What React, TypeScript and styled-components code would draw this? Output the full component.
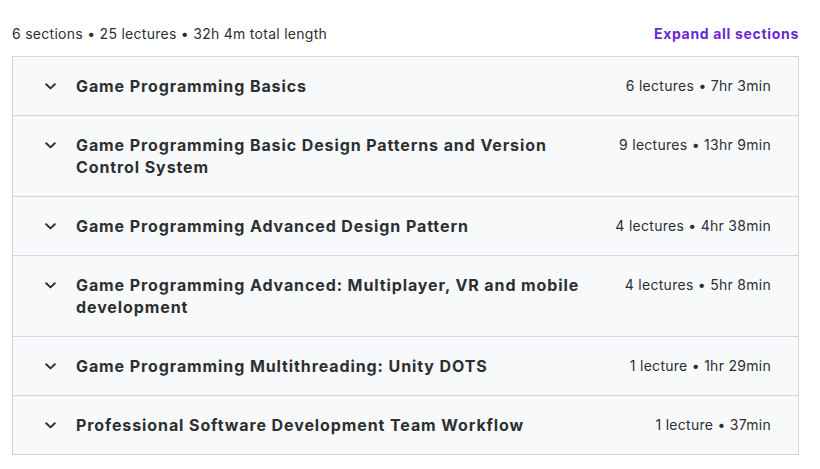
import React from "react";
import styled, { createGlobalStyle } from "styled-components";

const Global = createGlobalStyle`
  html, body { margin: 0; padding: 0; background: #ffffff; }
  body { font-family: Inter, "Noto Sans", sans-serif; color: #2d2f31; -webkit-font-smoothing: antialiased; }
  * { box-sizing: border-box; }
`;

const Page = styled.div`
  width: 820px;
  padding: 22px 21px 0 12px;
`;

const Header = styled.div`
  display: flex;
  justify-content: space-between;
  align-items: center;
  height: 22px;
  margin-bottom: 12px;
`;

const Summary = styled.span`
  font-size: 14px;
  letter-spacing: 0.28px;
  color: #2d2f31;
`;

const ExpandButton = styled.button`
  border: none;
  background: none;
  padding: 0;
  font-family: inherit;
  font-size: 14px;
  font-weight: 700;
  letter-spacing: 0.68px;
  color: #6d28d2;
  cursor: pointer;
`;

const Accordion = styled.div`
  border: 1px solid #d1d7dc;
  border-bottom: none;
`;

const Row = styled.div`
  display: flex;
  align-items: flex-start;
  background: #f7f9fa;
  border-bottom: 1px solid #d1d7dc;
  padding: 18px 27px 18px 29px;
`;

const Chevron = styled.span`
  flex: none;
  width: 16px;
  height: 22px;
  display: flex;
  align-items: center;
  justify-content: center;
  margin-right: 18px;
`;

const Title = styled.h3`
  flex: 1;
  margin: 0;
  font-size: 16px;
  line-height: 22px;
  font-weight: 700;
  letter-spacing: 0.9px;
  color: #2d2f31;
  max-width: 515px;
`;

const Meta = styled.span`
  margin-left: auto;
  padding-left: 16px;
  font-size: 14px;
  line-height: 22px;
  letter-spacing: 0.28px;
  color: #2d2f31;
  white-space: nowrap;
`;

const sections = [
  { title: "Game Programming Basics", meta: "6 lectures • 7hr 3min" },
  { title: "Game Programming Basic Design Patterns and Version Control System", meta: "9 lectures • 13hr 9min" },
  { title: "Game Programming Advanced Design Pattern", meta: "4 lectures • 4hr 38min" },
  { title: "Game Programming Advanced: Multiplayer, VR and mobile development", meta: "4 lectures • 5hr 8min" },
  { title: "Game Programming Multithreading: Unity DOTS", meta: "1 lecture • 1hr 29min" },
  { title: "Professional Software Development Team Workflow", meta: "1 lecture • 37min" },
];

const ChevronIcon = () => (
  <svg width="11" height="7" viewBox="0 0 11 7" fill="none">
    <path d="M1.2 1.2 L5.5 5.4 L9.8 1.2" stroke="#2d2f31" strokeWidth="1.9" strokeLinecap="round" strokeLinejoin="round" />
  </svg>
);

export default function App() {
  return (
    <Page>
      <Global />
      <Header>
        <Summary>6 sections • 25 lectures • 32h 4m total length</Summary>
        <ExpandButton>Expand all sections</ExpandButton>
      </Header>
      <Accordion>
        {sections.map((s) => (
          <Row key={s.title}>
            <Chevron><ChevronIcon /></Chevron>
            <Title>{s.title}</Title>
            <Meta>{s.meta}</Meta>
          </Row>
        ))}
      </Accordion>
    </Page>
  );
}
